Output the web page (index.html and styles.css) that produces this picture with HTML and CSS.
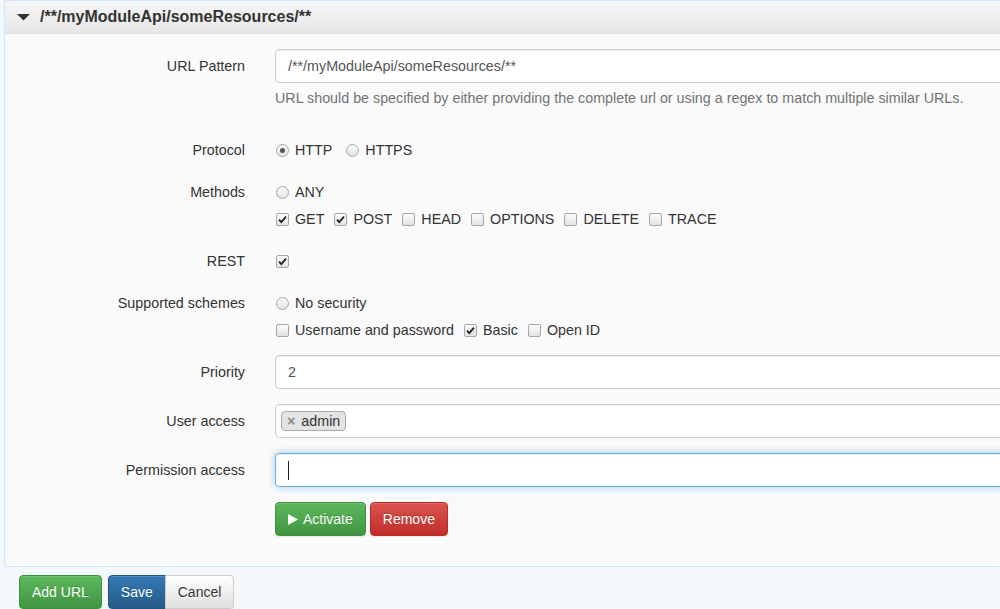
FILE: index.html
```html
<!DOCTYPE html>
<html>
<head>
<meta charset="utf-8">
<link rel="stylesheet" href="styles.css">
</head>
<body>
<div class="page">
  <div class="panel">
    <div class="panel-heading">
      <svg class="caret" width="13" height="7" viewBox="0 0 13 7"><polygon points="0,0 13,0 6.5,6.5" fill="#333"/></svg>
      <span class="title">/**/myModuleApi/someResources/**</span>
    </div>
    <div class="panel-body">
      <div class="form-group">
        <div class="control-label">URL Pattern</div>
        <div class="field">
          <div class="form-control">/**/myModuleApi/someResources/**</div>
          <p class="help-block">URL should be specified by either providing the complete url or using a regex to match multiple similar URLs.</p>
        </div>
      </div>

      <div class="form-group">
        <div class="control-label">Protocol</div>
        <div class="field">
          <div class="opt-line">
            <span class="opt radio-opt"><span class="radio checked"></span>HTTP</span>
            <span class="opt radio-opt"><span class="radio"></span>HTTPS</span>
          </div>
        </div>
      </div>

      <div class="form-group">
        <div class="control-label">Methods</div>
        <div class="field">
          <div class="opt-line">
            <span class="opt radio-opt"><span class="radio"></span>ANY</span>
          </div>
          <div class="opt-line">
            <span class="opt"><span class="cb"><svg viewBox="0 0 11 11" width="11" height="11"><path d="M2 5.6 L4.3 8.2 L9 2.6" fill="none" stroke="#222" stroke-width="1.8"/></svg></span>GET</span>
            <span class="opt"><span class="cb"><svg viewBox="0 0 11 11" width="11" height="11"><path d="M2 5.6 L4.3 8.2 L9 2.6" fill="none" stroke="#222" stroke-width="1.8"/></svg></span>POST</span>
            <span class="opt"><span class="cb"></span>HEAD</span>
            <span class="opt"><span class="cb"></span>OPTIONS</span>
            <span class="opt"><span class="cb"></span>DELETE</span>
            <span class="opt"><span class="cb"></span>TRACE</span>
          </div>
        </div>
      </div>

      <div class="form-group">
        <div class="control-label">REST</div>
        <div class="field">
          <div class="opt-line">
            <span class="opt"><span class="cb"><svg viewBox="0 0 11 11" width="11" height="11"><path d="M2 5.6 L4.3 8.2 L9 2.6" fill="none" stroke="#222" stroke-width="1.8"/></svg></span></span>
          </div>
        </div>
      </div>

      <div class="form-group">
        <div class="control-label">Supported schemes</div>
        <div class="field">
          <div class="opt-line">
            <span class="opt radio-opt"><span class="radio"></span>No security</span>
          </div>
          <div class="opt-line">
            <span class="opt"><span class="cb"></span>Username and password</span>
            <span class="opt"><span class="cb"><svg viewBox="0 0 11 11" width="11" height="11"><path d="M2 5.6 L4.3 8.2 L9 2.6" fill="none" stroke="#222" stroke-width="1.8"/></svg></span>Basic</span>
            <span class="opt"><span class="cb"></span>Open ID</span>
          </div>
        </div>
      </div>

      <div class="form-group">
        <div class="control-label">Priority</div>
        <div class="field">
          <div class="form-control">2</div>
        </div>
      </div>

      <div class="form-group">
        <div class="control-label">User access</div>
        <div class="field">
          <div class="form-control tags">
            <span class="tag"><span class="tag-x">×</span>admin</span>
          </div>
        </div>
      </div>

      <div class="form-group">
        <div class="control-label">Permission access</div>
        <div class="field">
          <div class="form-control focus"><span class="text-caret"></span></div>
        </div>
      </div>

      <div class="form-group last">
        <div class="control-label"></div>
        <div class="field">
          <div class="btn-row">
            <button class="btn btn-success"><svg class="play" width="10" height="11" viewBox="0 0 10 11"><polygon points="0,0 10,5.5 0,11" fill="#fff"/></svg>Activate</button>
            <button class="btn btn-danger">Remove</button>
          </div>
        </div>
      </div>
    </div>
  </div>

  <div class="bottom-bar">
    <button class="btn btn-success">Add URL</button>
    <div class="btn-group">
      <button class="btn btn-primary">Save</button>
      <button class="btn btn-default">Cancel</button>
    </div>
  </div>
</div>
</body>
</html>
```

FILE: styles.css
```css
html, body {
  margin: 0;
  padding: 0;
  overflow: hidden;
  background: #f3f8fd;
}
body {
  font-family: "Liberation Sans", Arial, sans-serif;
  font-size: 14.3px;
  line-height: 20px;
  color: #333;
}
.page {
  width: 1200px;
  padding-left: 4px;
}
.panel {
  border: 1px solid #d3e5f7;
  border-radius: 0 0 3px 3px;
  background: #fafafa;
}
.panel-heading {
  height: 32px;
  border-bottom: 1px solid #dddddd;
  background: linear-gradient(#f6f6f6, #e7e7e7);
  display: flex;
  align-items: center;
  padding-left: 12px;
}
.caret {
  display: block;
  margin-right: 10px;
}
.title {
  font-weight: bold;
  font-size: 16px;
  color: #333;
}
.panel-body {
  padding: 15px 0 15px 15px;
}
.form-group {
  display: flex;
  margin-bottom: 15px;
}
.control-label {
  width: 225px;
  text-align: right;
  padding-top: 7px;
  flex: none;
}
.field {
  flex: 1;
  margin-left: 30px;
}
.form-control {
  height: 32px;
  border: 1px solid #cccccc;
  border-radius: 4px;
  background: #fff;
  box-shadow: inset 0 1px 1px rgba(0,0,0,.075);
  padding: 0 12px;
  line-height: 32px;
  color: #555;
  box-sizing: content-box;
}
.form-control.focus {
  border-color: #66afe9;
  box-shadow: inset 0 1px 1px rgba(0,0,0,.075), 0 0 8px rgba(102,175,233,.6);
  display: flex;
  align-items: center;
}
.text-caret {
  display: block;
  width: 1px;
  height: 19px;
  background: #222;
}
.help-block {
  margin: 5px 0 10px;
  color: #737373;
}
.opt-line {
  display: flex;
  align-items: center;
  padding-top: 7px;
  height: 20px;
}
.opt {
  display: inline-flex;
  align-items: center;
  margin-right: 9px;
}
.opt.radio-opt {
  margin-right: 13px;
}
.cb, .radio {
  width: 11px;
  height: 11px;
  border: 1px solid #a6a6a6;
  background: linear-gradient(#fdfdfd, #e2e2e2);
  margin: 1px 6px 0 1px;
  display: flex;
  align-items: center;
  justify-content: center;
  flex: none;
}
.cb {
  border-radius: 2px;
}
.radio {
  border-radius: 50%;
}
.radio.checked::after {
  content: "";
  width: 5px;
  height: 5px;
  border-radius: 50%;
  background: #555;
}
.tags {
  padding: 0 5px;
  display: flex;
  align-items: center;
}
.tag {
  display: inline-flex;
  align-items: center;
  height: 18px;
  line-height: 18px;
  padding: 0 5px;
  border: 1px solid #aaaaaa;
  border-radius: 4px;
  background: #e4e4e4;
  color: #333;
}
.tag-x {
  color: #888;
  font-weight: bold;
  margin-right: 6px;
}
.btn-row {
  display: flex;
  gap: 4px;
}
.btn {
  font-family: "Liberation Sans", Arial, sans-serif;
  font-size: 14px;
  line-height: 20px;
  padding: 6px 12px;
  border: 1px solid transparent;
  border-radius: 4px;
  color: #fff;
  text-shadow: 0 -1px 0 rgba(0,0,0,.2);
  box-shadow: inset 0 1px 0 rgba(255,255,255,.15), 0 1px 1px rgba(0,0,0,.075);
  display: inline-flex;
  align-items: center;
  cursor: pointer;
}
.play {
  margin-right: 5px;
}
.btn-success {
  background: linear-gradient(#5cb85c, #419641);
  border-color: #3e8f3e;
}
.btn-danger {
  background: linear-gradient(#d9534f, #c12e2a);
  border-color: #b92c28;
}
.btn-primary {
  background: linear-gradient(#337ab7, #265a88);
  border-color: #245580;
}
.btn-default {
  background: linear-gradient(#ffffff, #e0e0e0);
  border-color: #cccccc;
  color: #333;
  text-shadow: 0 1px 0 #fff;
}
.bottom-bar {
  display: flex;
  gap: 6px;
  padding-left: 15px;
  margin-top: 8px;
}
.btn-group {
  display: flex;
}
.btn-group .btn-primary {
  border-radius: 4px 0 0 4px;
}
.btn-group .btn-default {
  border-radius: 0 4px 4px 0;
  margin-left: -1px;
}
```
